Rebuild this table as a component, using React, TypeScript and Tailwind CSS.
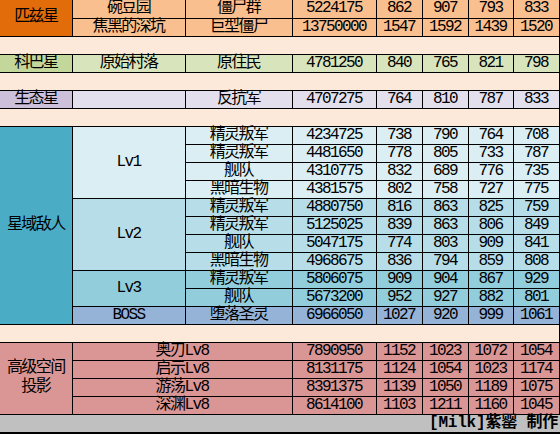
type Row = { name: string; hp: string; a: string; b: string; c: string; d: string };

// colour sets copied from the sheet
const ORANGE_LABEL = "bg-[#E26B0A]";
const ORANGE = "bg-[#FABF8F]";
const GREEN_LABEL = "bg-[#C4D79B]";
const GREEN = "bg-[#D8E4BC]";
const PURPLE_LABEL = "bg-[#CCC0DA]";
const PURPLE = "bg-[#E4DFEC]";
const TEAL = "bg-[#4BACC6]";
const RED = "bg-[#DA9694]";

const font = "font-['Liberation_Mono','Noto_Sans_CJK_SC',monospace] text-[16px] tracking-[-1.6px] text-black";
const cell = `border-r border-b border-black p-0 h-[18px] text-center whitespace-nowrap leading-[17px] ${font}`;

const Stats = ({ r, bg }: { r: Row; bg: string }) => (
  <>
    <td className={`${cell} ${bg}`}>{r.hp}</td>
    <td className={`${cell} ${bg}`}>{r.a}</td>
    <td className={`${cell} ${bg}`}>{r.b}</td>
    <td className={`${cell} ${bg}`}>{r.c}</td>
    <td className={`${cell} ${bg}`}>{r.d}</td>
  </>
);

const Spacer = () => (
  <tr>
    <td colSpan={8} className={`${cell} bg-[#FDE9D9]`} />
  </tr>
);

const r = (name: string, hp: string, a: string, b: string, c: string, d: string): Row => ({ name, hp, a, b, c, d });

const enemies = [
  {
    lv: "Lv1",
    bg: "bg-[#DAEEF3]",
    rows: [
      r("精灵叛军", "4234725", "738", "790", "764", "708"),
      r("精灵叛军", "4481650", "778", "805", "733", "787"),
      r("舰队", "4310775", "832", "689", "776", "735"),
      r("黑暗生物", "4381575", "802", "758", "727", "775"),
    ],
  },
  {
    lv: "Lv2",
    bg: "bg-[#B7DEE8]",
    rows: [
      r("精灵叛军", "4880750", "816", "863", "825", "759"),
      r("精灵叛军", "5125025", "839", "863", "806", "849"),
      r("舰队", "5047175", "774", "803", "909", "841"),
      r("黑暗生物", "4968675", "836", "794", "859", "808"),
    ],
  },
  {
    lv: "Lv3",
    bg: "bg-[#92CDDC]",
    rows: [
      r("精灵叛军", "5806075", "909", "904", "867", "929"),
      r("舰队", "5673200", "952", "927", "882", "801"),
    ],
  },
  {
    lv: "BOSS",
    bg: "bg-[#95B3D7]",
    rows: [r("堕落圣灵", "6966050", "1027", "920", "999", "1061")],
  },
];

const projections = [
  r("奥刃Lv8", "7890950", "1152", "1023", "1072", "1054"),
  r("启示Lv8", "8131175", "1124", "1054", "1023", "1174"),
  r("游荡Lv8", "8391375", "1139", "1050", "1189", "1075"),
  r("深渊Lv8", "8614100", "1103", "1211", "1160", "1045"),
];

export default function App() {
  const enemyCount = enemies.reduce((n, g) => n + g.rows.length, 0);

  return (
    <div className={`w-[560px] h-[434px] overflow-hidden bg-[#C0C0C0] ${font}`}>
      <table className={`table-fixed border-collapse w-[559px] ${font}`}>
        <colgroup>
          <col className="w-[72px]" />
          <col className="w-[113px]" />
          <col className="w-[107px]" />
          <col className="w-[84px]" />
          <col className="w-[46px]" />
          <col className="w-[46px]" />
          <col className="w-[45px]" />
          <col className="w-[46px]" />
        </colgroup>
        <tbody>
          {/* 匹兹星 */}
          <tr>
            <td rowSpan={2} className={`${cell} ${ORANGE_LABEL}`}>匹兹星</td>
            <td className={`${cell} ${ORANGE}`}>碗豆园</td>
            <td className={`${cell} ${ORANGE}`}>僵尸群</td>
            <Stats r={r("", "5224175", "862", "907", "793", "833")} bg={ORANGE} />
          </tr>
          <tr>
            <td className={`${cell} ${ORANGE}`}>焦黑的深坑</td>
            <td className={`${cell} ${ORANGE}`}>巨型僵尸</td>
            <Stats r={r("", "13750000", "1547", "1592", "1439", "1520")} bg={ORANGE} />
          </tr>
          <Spacer />

          {/* 科巴星 */}
          <tr>
            <td className={`${cell} ${GREEN_LABEL}`}>科巴星</td>
            <td className={`${cell} ${GREEN}`}>原始村落</td>
            <td className={`${cell} ${GREEN}`}>原住民</td>
            <Stats r={r("", "4781250", "840", "765", "821", "798")} bg={GREEN} />
          </tr>
          <Spacer />

          {/* 生态星 */}
          <tr>
            <td className={`${cell} ${PURPLE_LABEL}`}>生态星</td>
            <td className={`${cell} ${PURPLE}`} />
            <td className={`${cell} ${PURPLE}`}>反抗军</td>
            <Stats r={r("", "4707275", "764", "810", "787", "833")} bg={PURPLE} />
          </tr>
          <Spacer />

          {/* 星域敌人 */}
          {enemies.map((g, gi) =>
            g.rows.map((row, i) => (
              <tr key={`${g.lv}-${i}`}>
                {gi === 0 && i === 0 && (
                  <td rowSpan={enemyCount} className={`${cell} ${TEAL}`}>星域敌人</td>
                )}
                {i === 0 && (
                  <td rowSpan={g.rows.length} className={`${cell} ${g.bg}`}>{g.lv}</td>
                )}
                <td className={`${cell} ${g.bg}`}>{row.name}</td>
                <Stats r={row} bg={g.bg} />
              </tr>
            ))
          )}
          <Spacer />

          {/* 高级空间投影 */}
          {projections.map((row, i) => (
            <tr key={row.name}>
              {i === 0 && (
                <td rowSpan={projections.length} className={`${cell} ${RED} leading-[19px]`}>
                  高级空间
                  <br />
                  投影
                </td>
              )}
              <td colSpan={2} className={`${cell} ${RED}`}>{row.name}</td>
              <Stats r={row} bg={RED} />
            </tr>
          ))}
        </tbody>
      </table>
      <div className="h-[17px] flex items-center justify-end pr-[2px] font-bold leading-none tracking-[-0.2px] whitespace-pre">
        [Milk]紫罂 制作
      </div>
      <div className="h-[3px] bg-black" />
    </div>
  );
}
